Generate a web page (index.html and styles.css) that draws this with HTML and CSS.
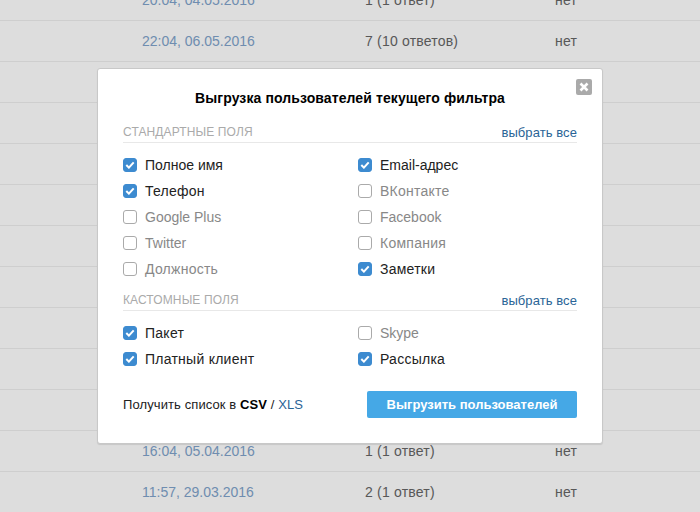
FILE: index.html
```html
<!DOCTYPE html>
<html lang="ru">
<head>
<meta charset="utf-8">
<title>Выгрузка пользователей</title>
<link rel="stylesheet" href="styles.css">
</head>
<body>
<div class="table">
  <div class="row"><span class="date">20:04, 04.05.2016</span><span class="count">1 (1 ответ)</span><span class="flag">нет</span></div>
  <div class="row"><span class="date">22:04, 06.05.2016</span><span class="count">7 (10 ответов)</span><span class="flag">нет</span></div>
  <div class="row"></div><div class="row"></div><div class="row"></div><div class="row"></div>
  <div class="row"></div><div class="row"></div><div class="row"></div><div class="row"></div>
  <div class="row"></div>
  <div class="row"><span class="date">16:04, 05.04.2016</span><span class="count">1 (1 ответ)</span><span class="flag">нет</span></div>
  <div class="row"><span class="date">11:57, 29.03.2016</span><span class="count">2 (1 ответ)</span><span class="flag">нет</span></div>
</div>
<div class="overlay"></div>
<div class="modal">
  <button class="close" aria-label="Закрыть">
    <svg width="10" height="10" viewBox="0 0 10 10"><path d="M1.5 1.5l7 7M8.5 1.5l-7 7" stroke="#fff" stroke-width="2.6" fill="none"/></svg>
  </button>
  <h2 class="title">Выгрузка пользователей текущего фильтра</h2>

  <div class="section-head"><span class="section-name">СТАНДАРТНЫЕ ПОЛЯ</span><a class="link" href="#">выбрать все</a></div>
  <div class="fields">
    <label class="field on"><span class="box"><svg width="10" height="8" viewBox="0 0 10 8"><path d="M1.3 4l2.6 2.6L8.7 1.3" stroke="#fff" stroke-width="2" fill="none"/></svg></span>Полное имя</label>
    <label class="field on"><span class="box"><svg width="10" height="8" viewBox="0 0 10 8"><path d="M1.3 4l2.6 2.6L8.7 1.3" stroke="#fff" stroke-width="2" fill="none"/></svg></span>Email-адрес</label>
    <label class="field on wide"><span class="box"><svg width="10" height="8" viewBox="0 0 10 8"><path d="M1.3 4l2.6 2.6L8.7 1.3" stroke="#fff" stroke-width="2" fill="none"/></svg></span>Телефон</label>
    <label class="field wide"><span class="box"></span>ВКонтакте</label>
    <label class="field"><span class="box"></span>Google Plus</label>
    <label class="field"><span class="box"></span>Facebook</label>
    <label class="field"><span class="box"></span>Twitter</label>
    <label class="field wide"><span class="box"></span>Компания</label>
    <label class="field wide"><span class="box"></span>Должность</label>
    <label class="field on wide"><span class="box"><svg width="10" height="8" viewBox="0 0 10 8"><path d="M1.3 4l2.6 2.6L8.7 1.3" stroke="#fff" stroke-width="2" fill="none"/></svg></span>Заметки</label>
  </div>

  <div class="section-head"><span class="section-name">КАСТОМНЫЕ ПОЛЯ</span><a class="link" href="#">выбрать все</a></div>
  <div class="fields">
    <label class="field on wide"><span class="box"><svg width="10" height="8" viewBox="0 0 10 8"><path d="M1.3 4l2.6 2.6L8.7 1.3" stroke="#fff" stroke-width="2" fill="none"/></svg></span>Пакет</label>
    <label class="field"><span class="box"></span>Skype</label>
    <label class="field on wide"><span class="box"><svg width="10" height="8" viewBox="0 0 10 8"><path d="M1.3 4l2.6 2.6L8.7 1.3" stroke="#fff" stroke-width="2" fill="none"/></svg></span>Платный клиент</label>
    <label class="field on wide"><span class="box"><svg width="10" height="8" viewBox="0 0 10 8"><path d="M1.3 4l2.6 2.6L8.7 1.3" stroke="#fff" stroke-width="2" fill="none"/></svg></span>Рассылка</label>
  </div>

  <div class="footer">
    <span class="export">Получить список в <b>CSV</b> / <a class="link" href="#">XLS</a></span>
    <button class="submit">Выгрузить пользователей</button>
  </div>
</div>
</body>
</html>
```
FILE: styles.css
```css
* { box-sizing: border-box; }
html, body { margin: 0; height: 512px; overflow: hidden; }
body {
  position: relative;
  background: #fff;
  font-family: "Liberation Sans", Arial, sans-serif;
  font-size: 14px;
  color: #000;
}
.table { margin-top: -20px; }
.row {
  display: grid;
  grid-template-columns: 223px 190px 1fr;
  align-items: center;
  height: 41px;
  padding-left: 142px;
  border-bottom: 1px solid #eee;
  line-height: 40px;
}
.date { color: #80a3cb; }
.count { color: #666; letter-spacing: 0.2px; }
.flag { color: #666; letter-spacing: 0.2px; }
.overlay {
  position: absolute;
  inset: 0;
  background: rgba(0, 0, 0, 0.135);
}
.modal {
  position: absolute;
  left: 97px;
  top: 68px;
  width: 506px;
  height: 376px;
  padding: 0 25px;
  background: #fff;
  border: 1px solid #c8c8c8;
  border-radius: 3px;
  box-shadow: 0 1px 1px rgba(0, 0, 0, 0.1);
}
.close {
  position: absolute;
  right: 10px;
  top: 10px;
  width: 16px;
  height: 16px;
  padding: 0;
  display: flex;
  align-items: center;
  justify-content: center;
  border: 0;
  border-radius: 2px;
  background: #aaa;
}
.title {
  margin: 20px 0 0;
  font-size: 14px;
  line-height: 18px;
  font-weight: bold;
  letter-spacing: 0.1px;
  text-align: center;
}
.section-head {
  display: flex;
  justify-content: space-between;
  align-items: center;
  height: 21px;
  margin-top: 15px;
  border-bottom: 1px solid #e8e8e8;
  font-size: 13px;
}
.section-name { color: #aaa; font-size: 12px; letter-spacing: 0.12px; }
.section-head .link { letter-spacing: 0.08px; }
.link { color: #2a6496; text-decoration: none; }
.fields {
  display: grid;
  grid-template-columns: 235px 1fr;
  grid-auto-rows: 26px;
  margin-top: 9px;
}
.fields + .section-head { margin-top: 8px; }
.field {
  display: flex;
  align-items: center;
  gap: 8px;
  color: #888;
}
.field.wide { letter-spacing: 0.25px; }
.field.on { color: #222; }
.box {
  width: 14px;
  height: 14px;
  display: flex;
  align-items: center;
  justify-content: center;
  border: 1px solid #aaa;
  border-radius: 3px;
  background: #fff;
}
.on .box { border-color: #3d8bd0; background: #3d8bd0; }
.footer {
  display: flex;
  justify-content: space-between;
  align-items: center;
  margin-top: 19px;
  font-size: 13px;
}
.export { color: #222; letter-spacing: 0.1px; }
.export b { color: #000; }
.submit {
  width: 210px;
  height: 27px;
  padding: 0;
  border: 0;
  border-radius: 2px;
  background: #45a8e6;
  color: #fff;
  font: bold 13px "Liberation Sans", Arial, sans-serif;
}
```
